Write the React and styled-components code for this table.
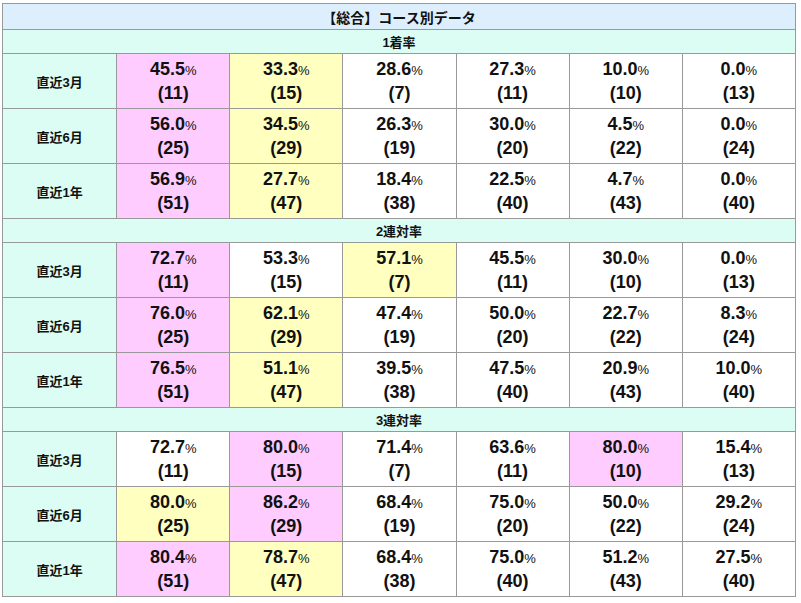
import React from "react";
import styled, { createGlobalStyle } from "styled-components";

const Global = createGlobalStyle`
  html, body { margin: 0; padding: 0; background: #fff; }
  body { font-family: "Liberation Sans", "Noto Sans CJK JP", Arial, sans-serif; color: #111; }
`;

const Wrap = styled.div`
  padding: 3px 0 0 2px;
`;

const Table = styled.table`
  width: 794px;
  border-collapse: collapse;
  table-layout: fixed;
  border: 1px solid #999;
`;

const TitleCell = styled.th`
  height: 25px;
  padding: 0;
  background: #ddeefc;
  border: 1px solid #999;
  font-size: 14px;
  font-weight: bold;
  text-align: center;
  vertical-align: middle;
`;

const SectionCell = styled.th`
  height: 23px;
  padding: 0;
  background: #dcfdf3;
  border: 1px solid #999;
  font-size: 13px;
  font-weight: bold;
  text-align: center;
  vertical-align: middle;
`;

const LabelCell = styled.th`
  height: 54px;
  padding: 0;
  background: #dcfdf3;
  border: 1px solid #999;
  font-size: 13px;
  font-weight: bold;
  text-align: center;
  vertical-align: middle;
`;

const bg = { p: "#ffccff", y: "#ffffc0", w: "#ffffff" };

const DataCell = styled.td`
  height: 54px;
  padding: 0;
  background: ${(p) => bg[p.$tone]};
  border: 1px solid #999;
  text-align: center;
  vertical-align: middle;
  font-weight: bold;
  font-size: 18px;
  line-height: 23px;
`;

const Pct = styled.span`
  font-size: 13px;
  font-weight: normal;
`;

const Line = styled.div``;

const sections = [
  {
    name: "1着率",
    rows: [
      ["直近3月", [["45.5", 11, "p"], ["33.3", 15, "y"], ["28.6", 7], ["27.3", 11], ["10.0", 10], ["0.0", 13]]],
      ["直近6月", [["56.0", 25, "p"], ["34.5", 29, "y"], ["26.3", 19], ["30.0", 20], ["4.5", 22], ["0.0", 24]]],
      ["直近1年", [["56.9", 51, "p"], ["27.7", 47, "y"], ["18.4", 38], ["22.5", 40], ["4.7", 43], ["0.0", 40]]],
    ],
  },
  {
    name: "2連対率",
    rows: [
      ["直近3月", [["72.7", 11, "p"], ["53.3", 15], ["57.1", 7, "y"], ["45.5", 11], ["30.0", 10], ["0.0", 13]]],
      ["直近6月", [["76.0", 25, "p"], ["62.1", 29, "y"], ["47.4", 19], ["50.0", 20], ["22.7", 22], ["8.3", 24]]],
      ["直近1年", [["76.5", 51, "p"], ["51.1", 47, "y"], ["39.5", 38], ["47.5", 40], ["20.9", 43], ["10.0", 40]]],
    ],
  },
  {
    name: "3連対率",
    rows: [
      ["直近3月", [["72.7", 11], ["80.0", 15, "p"], ["71.4", 7], ["63.6", 11], ["80.0", 10, "p"], ["15.4", 13]]],
      ["直近6月", [["80.0", 25, "y"], ["86.2", 29, "p"], ["68.4", 19], ["75.0", 20], ["50.0", 22], ["29.2", 24]]],
      ["直近1年", [["80.4", 51, "p"], ["78.7", 47, "y"], ["68.4", 38], ["75.0", 40], ["51.2", 43], ["27.5", 40]]],
    ],
  },
];

export default function App() {
  return (
    <>
      <Global />
      <Wrap>
        <Table>
          <colgroup>
            <col style={{ width: 114 }} />
            {[0, 1, 2, 3, 4, 5].map((i) => (
              <col key={i} style={{ width: 113 }} />
            ))}
          </colgroup>
          <tbody>
            <tr>
              <TitleCell colSpan={7}>【総合】コース別データ</TitleCell>
            </tr>
            {sections.map((s) => (
              <React.Fragment key={s.name}>
                <tr>
                  <SectionCell colSpan={7}>{s.name}</SectionCell>
                </tr>
                {s.rows.map(([label, cells]) => (
                  <tr key={label}>
                    <LabelCell>{label}</LabelCell>
                    {cells.map(([v, n, t], i) => (
                      <DataCell key={i} $tone={t || "w"}>
                        <Line>
                          {v}
                          <Pct>%</Pct>
                        </Line>
                        <Line>({n})</Line>
                      </DataCell>
                    ))}
                  </tr>
                ))}
              </React.Fragment>
            ))}
          </tbody>
        </Table>
      </Wrap>
    </>
  );
}
